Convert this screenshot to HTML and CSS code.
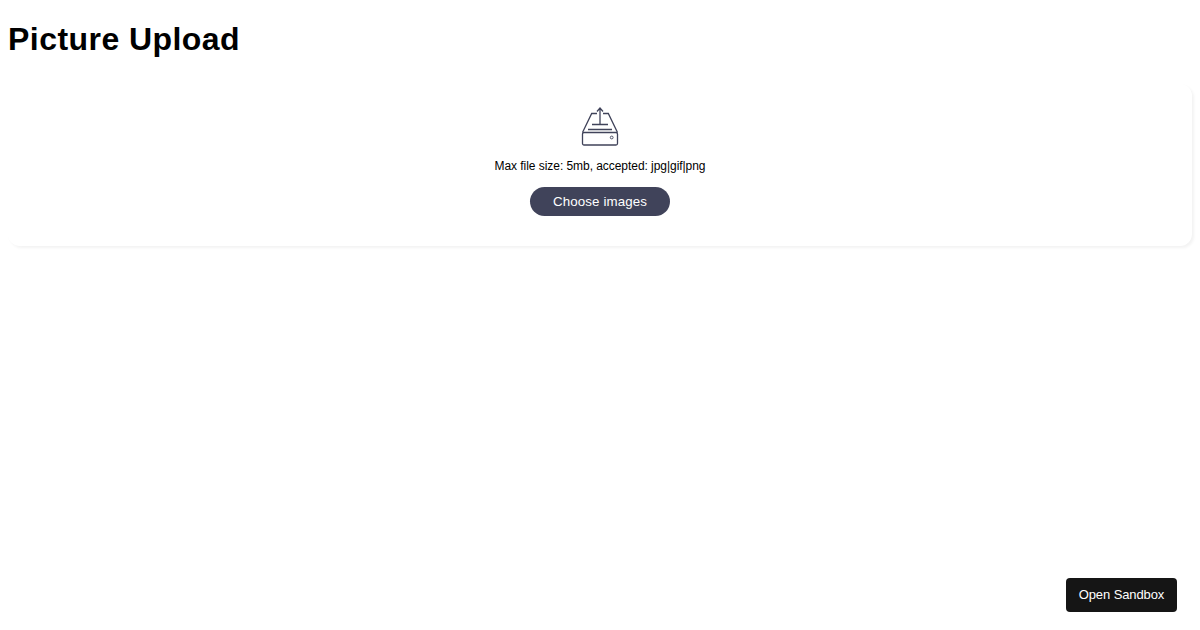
FILE: index.html
```
<!DOCTYPE html>
<html lang="en">
<head>
<meta charset="utf-8">
<title>Picture Upload</title>
<link rel="stylesheet" href="styles.css">
</head>
<body>
<h1 class="title">Picture Upload</h1>
<div class="card">
  <svg class="icon" width="38" height="40" viewBox="0 0 38 40" fill="none" stroke="#40435a" stroke-width="1.3">
    <path d="M19 17.500V1.500M16 4.500 19 1l3 3.500"/>
    <path d="M16 6.500H10.700L1.500 25.500M22 6.500H27.300L36.500 25.500"/>
    <path d="M11 17.500h16M7 22.500h24"/>
    <rect x="1.500" y="25.500" width="35" height="12.500" rx="1.500"/>
    <circle cx="30.700" cy="30.500" r="1.400" stroke-width="0.9"/>
  </svg>
  <p class="hint">Max file size: 5mb, accepted: jpg|gif|png</p>
  <button class="choose" type="button">Choose images</button>
</div>
<a class="sandbox" href="#">Open Sandbox</a>
</body>
</html>
```
FILE: styles.css
```
html, body { height: 100%; }
body {
  margin: 0;
  padding: 0 8px;
  background: #fff;
  color: #000;
  font-family: Helvetica, "Liberation Sans", Arial, sans-serif;
  text-rendering: optimizeSpeed;
  box-sizing: border-box;
}
.title {
  margin: 0;
  padding-top: 21px;
  height: 84px;
  box-sizing: border-box;
  font-size: 32px;
  line-height: 37px;
  font-weight: 700;
  letter-spacing: 0.45px;
}
.card {
  height: 162px;
  box-sizing: border-box;
  padding-top: 23px;
  display: flex;
  flex-direction: column;
  align-items: center;
  border-radius: 12px;
  background: #fff;
  box-shadow: 2px 2px 3px rgba(0, 0, 0, 0.05);
}
.icon { display: block; flex: none; }
.hint {
  margin: 12px 0 0;
  font-size: 12px;
  line-height: 14px;
  letter-spacing: -0.05px;
}
.choose {
  margin-top: 14px;
  width: 140px;
  height: 29px;
  padding: 0;
  border: 0;
  border-radius: 15px;
  background: #40435a;
  color: #fff;
  font-family: inherit;
  font-size: 13.333px;
  letter-spacing: 0.12px;
}
.sandbox {
  position: fixed;
  right: 23px;
  bottom: 18px;
  width: 111px;
  height: 34px;
  box-sizing: border-box;
  padding-bottom: 2px;
  display: flex;
  align-items: center;
  justify-content: center;
  border-radius: 4px;
  background: #151515;
  color: #fff;
  font-size: 13px;
  letter-spacing: -0.1px;
  text-decoration: none;
}
```
